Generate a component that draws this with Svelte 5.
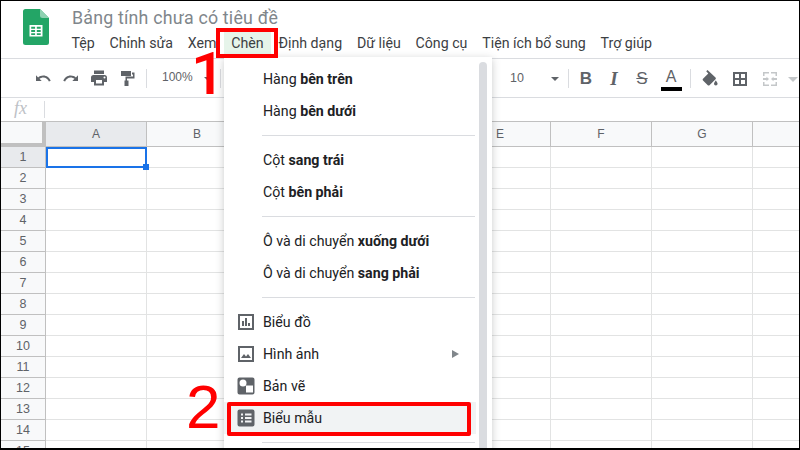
<script>
  const menus = ['Tệp', 'Chỉnh sửa', 'Xem', 'Chèn', 'Định dạng', 'Dữ liệu', 'Công cụ', 'Tiện ích bổ sung', 'Trợ giúp'];
  const cols = ['A', 'B', 'C', 'D', 'E', 'F', 'G', 'H'];
  const rows = Array.from({ length: 15 }, (_, i) => i + 1);
</script>

<div class="frame">
  <header class="top">
    <svg class="logo" width="26" height="36" viewBox="0 0 26 36">
      <path d="M2.500 0H17l9 9v24.500a2.500 2.500 0 0 1-2.500 2.500h-21A2.500 2.500 0 0 1 0 33.500v-31A2.500 2.500 0 0 1 2.500 0z" fill="#23a566" />
      <path d="M17 0l9 9h-6.500A2.500 2.500 0 0 1 17 6.500z" fill="#8ed1b1" />
      <path d="M6.500 16h13v11.500h-13z M8.200 17.700v2h3.900v-2z M13.800 17.700v2h3.900v-2z M8.200 21v2h3.900v-2z M13.800 21v2h3.900v-2z M8.200 24.200v1.700h3.900v-1.700z M13.800 24.200v1.700h3.900v-1.700z" fill="#fff" fill-rule="evenodd" />
    </svg>
    <div class="titles">
      <div class="doc">Bảng tính chưa có tiêu đề</div>
      <nav class="menubar">
        {#each menus as m}
          <span class="mi" class:on={m === 'Chèn'}>{m}</span>
        {/each}
      </nav>
    </div>
  </header>

  <div class="toolbar">
    <svg class="ic first" viewBox="0 0 18 18"><path d="M9.300 6.500c-2 0-3.800.7-5.200 1.900L2 6.300V12h5.700L5.500 9.800c1-.8 2.400-1.400 3.800-1.400 2.600 0 4.800 1.700 5.600 4l1.800-.6C15.600 8.700 12.700 6.500 9.300 6.500z" /></svg>
    <svg class="ic" viewBox="0 0 18 18"><path d="M8.700 6.500c2 0 3.800.7 5.200 1.900L16 6.300V12h-5.700l2.200-2.200c-1-.8-2.400-1.400-3.800-1.400-2.600 0-4.800 1.700-5.600 4l-1.800-.6C2.400 8.700 5.300 6.500 8.700 6.500z" /></svg>
    <svg class="ic" viewBox="0 0 18 18"><path d="M14.500 6h-11A2.500 2.500 0 0 0 1 8.500V13h3v3.500h10V13h3V8.500A2.500 2.500 0 0 0 14.500 6zM12 14.500H6V11h6zM14.500 9.500a1 1 0 1 1 0-2 1 1 0 0 1 0 2zM14 1.500H4v3.500h10z" /></svg>
    <svg class="ic" viewBox="0 0 18 18"><path d="M3 2h10v5H3zM14 3.500h2.500v6H9v2H10.500V17h-4v-5.500H7.500v-4h7.500V5.500H14z" /></svg>
    <i class="sep s1"></i>
    <span class="zoomval">100%</span>
    <span class="caret c1"></span>
    <i class="sep s2"></i>
    <span class="size">10</span>
    <span class="caret c2"></span>
    <i class="sep s3"></i>
    <span class="fmt b">B</span>
    <span class="fmt it">I</span>
    <span class="fmt st">S</span>
    <span class="fmt ac">A<i class="abar"></i></span>
    <i class="sep s4"></i>
    <svg class="ic fill" viewBox="0 0 18 18"><path d="M6.500 1L5.200 2.300 7.300 4.400 2 9.700c-.5.500-.5 1.200 0 1.700l4.800 4.800c.5.500 1.200.5 1.700 0l6-6c.5-.5.500-1.200 0-1.700zM14.800 11.500s-1.800 2-1.800 3.200a1.800 1.800 0 0 0 3.600 0c0-1.200-1.800-3.200-1.800-3.200z" /></svg>
    <svg class="ic bord" viewBox="0 0 18 18"><path fill-rule="evenodd" d="M2 2h14v14H2zM4 4v4h4V4zM10 4v4h4V4zM4 10v4h4v-4zM10 10v4h4v-4z" /></svg>
    <svg class="ic merge" viewBox="0 0 18 18"><path d="M2 2h6v1.500H3.500V6H2zM10 2h6v4h-1.500V3.500H10zM2 12h1.500v2.500H8V16H2zM14.500 12H16v4h-6v-1.500h4.500zM2 8h3.500V6.800L8 9l-2.500 2.200V10H2zM16 8h-3.500V6.800L10 9l2.500 2.200V10H16z" /></svg>
    <span class="caret c3"></span>
  </div>

  <div class="formula">
    <span class="fx">fx</span>
  </div>

  <div class="sheet">
    <div class="corner"></div>
    {#each cols as c}
      <div class="colh" class:sel={c === 'A'}>{c}</div>
    {/each}
    <div class="colh tail"></div>
    {#each rows as r}
      <div class="rowh" class:sel={r === 1}>{r}</div>
      {#each cols as c}
        <div class="cell"></div>
      {/each}
      <div class="cell tail"></div>
    {/each}
    <div class="active"><i class="handle"></i></div>
  </div>

  <div class="dropdown">
    <div class="dd-item"><span>Hàng <b>bên trên</b></span></div>
    <div class="dd-item"><span>Hàng <b>bên dưới</b></span></div>
    <hr />
    <div class="dd-item"><span>Cột <b>sang trái</b></span></div>
    <div class="dd-item"><span>Cột <b>bên phải</b></span></div>
    <hr />
    <div class="dd-item"><span>Ô và di chuyển <b>xuống dưới</b></span></div>
    <div class="dd-item"><span>Ô và di chuyển <b>sang phải</b></span></div>
    <hr />
    <div class="dd-item">
      <svg class="mic" viewBox="0 0 18 18"><path fill-rule="evenodd" d="M1 1h16v16H1zM3 3v12h12V3zM5 8h2v5H5zM8 5h2v8H8zM11 10h2v3h-2z" /></svg>
      <span>Biểu đồ</span>
    </div>
    <div class="dd-item">
      <svg class="mic" viewBox="0 0 18 18"><path fill-rule="evenodd" d="M1 1h16v16H1zM3 3v12h12V3zM4 13l3-4 2 2.500 2-2.500 3 4z" /></svg>
      <span>Hình ảnh</span>
      <span class="arrow"></span>
    </div>
    <div class="dd-item">
      <svg class="mic" viewBox="0 0 18 18"><path fill-rule="evenodd" d="M2.500 0.500h13a2 2 0 0 1 2 2v13a2 2 0 0 1-2 2h-13a2 2 0 0 1-2-2v-13a2 2 0 0 1 2-2zM9 8.500h7v7H9zM6 2.500a3.500 3.500 0 1 0 0 7 3.500 3.500 0 0 0 0-7z" /></svg>
      <span>Bản vẽ</span>
    </div>
    <div class="dd-item hl">
      <svg class="mic" viewBox="0 0 18 18"><path fill-rule="evenodd" d="M2.500 0.500h13a2 2 0 0 1 2 2v13a2 2 0 0 1-2 2h-13a2 2 0 0 1-2-2v-13a2 2 0 0 1 2-2zM4 4.500v2h2v-2zM8 4.500v2h6.500v-2zM4 8v2h2V8zM8 8v2h6.500V8zM4 11.500v2h2v-2zM8 11.500v2h6.500v-2z" /></svg>
      <span>Biểu mẫu</span>
    </div>
    <hr />
    <div class="scroll"></div>
  </div>

  <div class="mark m1"></div>
  <div class="mark m2"></div>
  <span class="num n1">1</span>
  <span class="num n2">2</span>
</div>

<style>
  :global(body) { margin: 0; background: #fff; }
  .frame {
    position: relative; width: 800px; height: 450px; box-sizing: border-box; overflow: hidden;
    background: #fff; border: solid #000; border-width: 1px 1px 2px 1px;
    font-family: Roboto, "Liberation Sans", sans-serif; color: #3c4043;
  }

  .top { display: flex; height: 58px; box-sizing: border-box; border-bottom: 1px solid #dadce0; }
  .logo { margin: 8px 0 0 22px; flex: none; }
  .titles { margin-left: 23px; }
  .doc { font-size: 17.800px; line-height: 20px; margin-top: 7px; color: #80868b; letter-spacing: 0.2px; }
  .menubar { display: flex; margin: 2px 0 0 -8px; font-size: 14.200px; line-height: 26px; color: #3c4043; }
  .mi { padding: 0 7.400px; white-space: nowrap; }
  .mi.on { background: #e6f4ea; }

  .toolbar { position: relative; display: flex; align-items: center; height: 39px; box-sizing: border-box; border-bottom: 1px solid #dadce0; }
  .ic { width: 18px; height: 18px; fill: #5f6368; margin-right: 10px; flex: none; }
  .ic.first { margin-left: 33px; }
  .ic.fill { position: absolute; left: 700px; top: 10px; }
  .ic.bord { position: absolute; left: 730px; top: 11px; }
  .ic.merge { position: absolute; left: 760px; top: 11px; fill: #c4c7c9; }
  .sep { position: absolute; top: 10px; width: 1px; height: 19px; background: #dadce0; }
  .s1 { left: 145px; } .s2 { left: 219px; } .s3 { left: 567px; } .s4 { left: 689px; }
  .zoomval { position: absolute; left: 161px; top: 11px; font: 12px "Liberation Sans", Arial, sans-serif; color: #5f6368; }
  .size { position: absolute; left: 509px; top: 12px; font: 12.500px "Liberation Sans", Arial, sans-serif; color: #5f6368; }
  .caret { position: absolute; top: 18px; width: 0; height: 0; border: 4px solid transparent; border-top: 4px solid #5f6368; border-bottom: 0; }
  .c1 { left: 203px; } .c2 { left: 550px; } .c3 { left: 787px; border-width: 5px 5px 0; border-top-color: #c4c7c9; }
  .fmt { position: absolute; top: 10px; width: 20px; text-align: center; font: 17px/20px "Liberation Sans", Arial, sans-serif; color: #5f6368; }
  .b { left: 575px; font-weight: 700; }
  .it { left: 603px; font: italic 700 19px/20px "Liberation Serif", serif; }
  .st { left: 631px; text-decoration: line-through; }
  .ac { left: 660px; top: 8px; font-size: 16px; }
  .abar { position: absolute; left: 0; top: 20px; width: 21px; height: 4px; background: #000; }

  .formula { height: 24px; box-sizing: border-box; border-bottom: 1px solid #c0c0c0; display: flex; align-items: center; }
  .fx { width: 44px; height: 17px; box-sizing: border-box; border-right: 1px solid #dadce0; padding-left: 13px; font: italic 18px/15px "Liberation Serif", serif; color: #bdc1c6; }

  .sheet { position: relative; display: grid; grid-template-columns: 45px repeat(8, 101px) 1fr; grid-template-rows: 25px; grid-auto-rows: 21px; font: 12px "Liberation Sans", Arial, sans-serif; color: #5f6368; }
  .corner { box-sizing: border-box; background: #f8f9fa; border-right: 4px solid #c0c0c0; border-bottom: 4px solid #c0c0c0; }
  .colh { box-sizing: border-box; background: #f8f9fa; border-right: 1px solid #c0c0c0; border-bottom: 1px solid #c0c0c0; display: flex; align-items: center; justify-content: center; }
  .colh.sel { background: #e8eaed; }
  .colh.tail { border-right: 0; }
  .rowh { box-sizing: border-box; background: #f8f9fa; border-right: 1px solid #c0c0c0; border-bottom: 1px solid #c0c0c0; display: flex; align-items: center; justify-content: center; font-size: 12.500px; }
  .rowh.sel { background: #e8eaed; }
  .cell { box-sizing: border-box; border-right: 1px solid #e2e3e3; border-bottom: 1px solid #e2e3e3; }
  .cell.tail { border-right: 0; }
  .active { position: absolute; left: 45px; top: 25px; width: 101px; height: 21px; box-sizing: border-box; border: 2px solid #1a73e8; }
  .handle { position: absolute; right: -4px; bottom: -4px; width: 6px; height: 6px; background: #1a73e8; }

  .dropdown {
    position: absolute; left: 223px; top: 56px; width: 268px; height: 400px; box-sizing: border-box; padding-top: 6px;
    background: #fff; box-shadow: 0 2px 8px rgba(60, 64, 67, .28); font-size: 14.200px; color: #3c4043;
  }
  .dd-item { position: relative; display: flex; align-items: center; height: 32px; padding-left: 39px; color: #202124; width: 252px; box-sizing: border-box; }
  .dd-item b { font-weight: 700; }
  .dd-item.hl { background: #f1f3f4; }
  .mic { position: absolute; left: 13px; top: 7px; width: 18px; height: 18px; fill: #5f6368; }
  .arrow { position: absolute; left: 228px; top: 12px; width: 0; height: 0; border-left: 7px solid #80868b; border-top: 4px solid transparent; border-bottom: 4px solid transparent; }
  hr { margin: 8px 0 8px 38px; width: 213px; height: 1px; border: 0; background: #dadce0; }
  .scroll { position: absolute; left: 255px; top: 5px; width: 8px; height: 420px; background: #dadce0; border-radius: 4px; }

  .mark { position: absolute; box-sizing: border-box; border: 4px solid #f00; }
  .m1 { left: 215px; top: 27px; width: 62px; height: 30px; }
  .m2 { left: 226px; top: 401px; width: 244px; height: 34px; border-radius: 2px; }
  .num { position: absolute; font: 62px/60px "Liberation Sans", Arial, sans-serif; color: #f00; }
  .n1 { left: 190px; top: 43px; font: 500 60px/60px Roboto, sans-serif; }
  .n2 { left: 185px; top: 376px; }
</style>
